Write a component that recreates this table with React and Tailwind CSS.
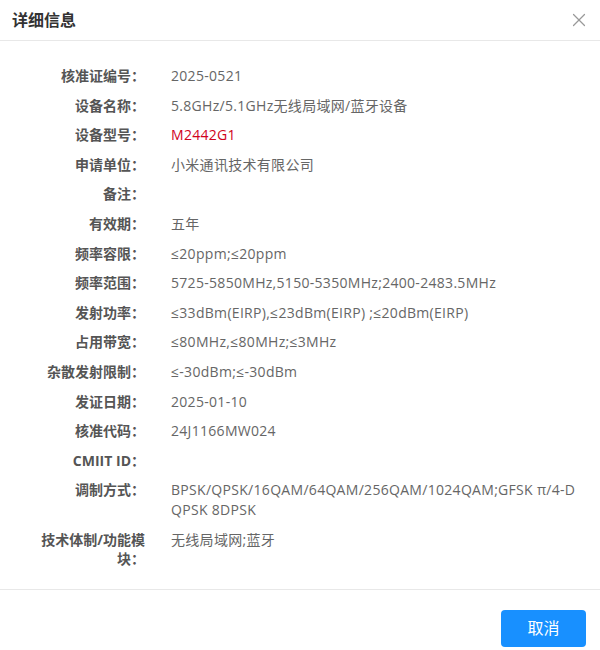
import { X } from 'lucide-react';

const rows = [
  { label: '核准证编号：', value: '2025-0521' },
  { label: '设备名称：', value: '5.8GHz/5.1GHz无线局域网/蓝牙设备' },
  { label: '设备型号：', value: 'M2442G1', red: true },
  { label: '申请单位：', value: '小米通讯技术有限公司' },
  { label: '备注：', value: '' },
  { label: '有效期：', value: '五年' },
  { label: '频率容限：', value: '≤20ppm;≤20ppm' },
  { label: '频率范围：', value: '5725-5850MHz,5150-5350MHz;2400-2483.5MHz' },
  { label: '发射功率：', value: '≤33dBm(EIRP),≤23dBm(EIRP) ;≤20dBm(EIRP)' },
  { label: '占用带宽：', value: '≤80MHz,≤80MHz;≤3MHz' },
  { label: '杂散发射限制：', value: '≤-30dBm;≤-30dBm' },
  { label: '发证日期：', value: '2025-01-10' },
  { label: '核准代码：', value: '24J1166MW024' },
  { label: 'CMIIT ID：', value: '' },
  { label: '调制方式：', value: 'BPSK/QPSK/16QAM/64QAM/256QAM/1024QAM;GFSK π/4-DQPSK 8DPSK' },
  { label: '技术体制/功能模块：', value: '无线局域网;蓝牙' },
];

function InfoRow({ label, value, red }) {
  return (
    <div className="flex py-[5px] leading-[19.6px]">
      <div className="w-[105px] shrink-0 text-right font-bold text-[#555]">{label}</div>
      <div
        className={`ml-[26px] w-[410px] break-all tracking-[0.3px] ${red ? 'text-[#d0021b]' : 'text-[#666]'}`}
      >
        {value}
      </div>
    </div>
  );
}

export default function App() {
  return (
    <div
      className="w-[600px] h-[650px] bg-white flex flex-col text-[14px]"
      style={{ fontFamily: '"Open Sans", "Noto Sans CJK SC", sans-serif' }}
    >
      <div className="h-[41px] shrink-0 flex items-center justify-between pl-3 pr-[10px] border-b border-[#e8e8e8]">
        <h2 className="text-[16px] font-bold text-[#333]">详细信息</h2>
        <X className="w-[22px] h-[22px] text-[#999]" strokeWidth={1.3} />
      </div>

      <div className="pt-5 pb-[15px] pl-10 border-b border-[#e8e8e8]">
        {rows.map((r) => (
          <InfoRow key={r.label} {...r} />
        ))}
      </div>

      <div className="flex justify-end pt-5 pr-[14px]">
        <button className="w-[85px] h-[37px] rounded-[4px] bg-[#1890ff] text-white text-[16px]">
          取消
        </button>
      </div>
    </div>
  );
}
